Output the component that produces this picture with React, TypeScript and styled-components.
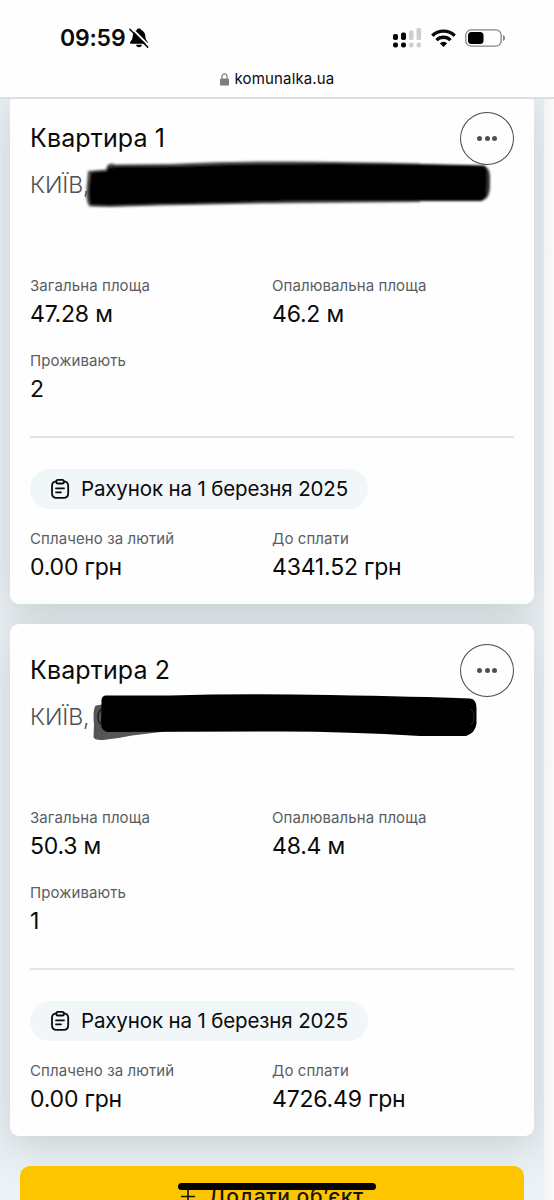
import React from "react";
import styled, { createGlobalStyle } from "styled-components";

const GlobalStyle = createGlobalStyle`
  html, body { margin: 0; padding: 0; }
  body { background: #f8f8fa; font-family: Inter, "Noto Sans", sans-serif; color: #0a0a0a; }
  * { box-sizing: border-box; }
`;

const Screen = styled.div`
  position: relative;
  width: 554px;
  height: 1200px;
  overflow: hidden;
  background: linear-gradient(90deg, #f2f2f5 544px, #fafafb 554px);
`;

const BrowserBar = styled.header`
  position: relative;
  z-index: 2;
  height: 99px;
  background: #fefefe;
  border-bottom: 2px solid #dcdfe2;
`;

const StatusBar = styled.div`
  display: flex;
  align-items: center;
  height: 66px;
  padding: 10px 48px 0 60px;
`;

const Clock = styled.span`
  width: 69px;
  font-size: 23px;
  font-weight: 600;
  line-height: 28px;
  letter-spacing: -0.2px;
  white-space: nowrap;
`;

const StatusIcons = styled.div`
  display: flex;
  align-items: center;
  margin-left: auto;
  gap: 9px;
`;

const AddressBar = styled.div`
  display: flex;
  align-items: center;
  justify-content: center;
  gap: 6px;
  height: 26px;
  font-size: 15px;
  line-height: 20px;
  letter-spacing: 0.15px;
`;

const Page = styled.main`
  width: 544px;
  height: 1108px;
  margin-top: -7px;
  padding: 0 10px;
  background: #ebf2f5;
  overflow: hidden;
`;

const CardList = styled.div`
  display: flex;
  flex-direction: column;
  gap: 20px;
`;

const Card = styled.section`
  position: relative;
  height: 512px;
  padding: 20px 20px 0;
  border-radius: 9px;
  background: #fefefe;
  box-shadow: 0 10px 40px rgba(40, 50, 55, 0.18);
`;

const CardHeader = styled.div`
  display: flex;
  align-items: center;
  justify-content: space-between;
  height: 53px;
`;

const Title = styled.h2`
  margin: -1px 0 0;
  font-size: 25px;
  font-weight: 400;
  line-height: 30px;
  letter-spacing: 0.12px;
`;

const MoreButton = styled.button`
  display: flex;
  align-items: center;
  justify-content: center;
  gap: 2.5px;
  width: 54px;
  height: 53px;
  padding: 0;
  border: 1.5px solid #4b4b4d;
  border-radius: 50%;
  background: transparent;
`;

const Dot = styled.span`
  width: 5px;
  height: 5px;
  border-radius: 50%;
  background: #505052;
`;

const Address = styled.div`
  height: 28px;
  margin-top: 6px;
  color: #505158;
  font-size: 23px;
  font-weight: 300;
  line-height: 28px;
  letter-spacing: -0.1px;
`;

const Stroke = styled.svg`
  position: absolute;
  left: 70px;
  top: 60px;
  width: 420px;
  height: 64px;
`;

const Stats = styled.div<{ $top: number }>`
  display: grid;
  grid-template-columns: 242px 1fr;
  row-gap: 23px;
  margin-top: ${(p) => p.$top}px;
`;

const Label = styled.div`
  color: #5a5d62;
  font-size: 15px;
  line-height: 20px;
  letter-spacing: 0.09px;
`;

const Value = styled.div`
  margin-top: 4px;
  font-size: 23px;
  line-height: 28px;
  letter-spacing: -0.2px;
`;

const Divider = styled.hr`
  height: 2px;
  margin: 33px 0 31px;
  border: 0;
  background: #e0e3e9;
`;

const Pill = styled.div`
  display: inline-flex;
  align-items: center;
  gap: 11px;
  width: 338px;
  height: 40px;
  padding: 0 0 1px 20px;
  border-radius: 20px;
  background: #f1f6f9;
  font-size: 20.5px;
  letter-spacing: -0.14px;
  white-space: nowrap;
`;

const AddButton = styled.button`
  display: flex;
  align-items: flex-start;
  justify-content: center;
  gap: 12px;
  width: 504px;
  height: 60px;
  margin: 30px 10px 0;
  padding: 18px 0 0;
  border: 0;
  border-radius: 10px;
  background: #fdc500;
  color: #16130a;
  font-family: inherit;
  font-size: 21px;
  font-weight: 500;
  line-height: 26px;
  letter-spacing: 0.6px;
  position: relative;
`;

const HomeIndicator = styled.div`
  position: absolute;
  z-index: 3;
  left: 178px;
  top: 1183px;
  width: 198px;
  height: 7px;
  border-radius: 4px;
  background: #000;
`;

const BellOff = () => (
  <svg width="20" height="20" viewBox="0 0 20 20">
    <path d="M10 .5c1.100 0 1.900.5 2.200 1.400 2.600.9 3.800 3 4 5.700.2 3.300.9 4.400 2.500 6.300.6.800.2 1.900-.8 1.900H2.100c-1 0-1.400-1.100-.8-1.900 1.600-1.900 2.300-3 2.500-6.300.2-2.700 1.400-4.800 4-5.700C8.100 1 8.900.5 10 .5z" />
    <path d="M7 16.800h6c-.3 1.700-1.500 2.500-3 2.500s-2.700-.8-3-2.500z" />
    <path d="M2 -.4 20.400 18" stroke="#fefefe" strokeWidth="1.800" />
    <path d="M.8 1.200 18.700 19.100" stroke="#0a0a0a" strokeWidth="1.500" strokeLinecap="round" />
  </svg>
);

const Signal = () => (
  <svg width="29" height="20" viewBox="0 0 29 20">
    <g fill="#0a0a0a">
      <rect x="0" y="6" width="5" height="6" rx="1.800" />
      <rect x="8" y="4.500" width="5" height="7.500" rx="1.800" />
      <rect x="0" y="14.500" width="5" height="5" rx="2" />
      <rect x="8" y="14.500" width="5" height="5" rx="2" />
    </g>
    <g fill="#cfcfcf">
      <rect x="16" y="2.500" width="4.600" height="9.500" rx="1.500" />
      <rect x="23.500" y="0" width="4.600" height="12" rx="1.500" />
      <rect x="16" y="14.500" width="4.600" height="5" rx="2" />
      <rect x="23.500" y="14.500" width="4.600" height="5" rx="2" />
    </g>
  </svg>
);

const Wifi = () => (
  <svg width="25" height="18" viewBox="0 0 25 18">
    <g fill="none" stroke="#0a0a0a" strokeWidth="3.400">
      <path d="M1.300 6.700a15.900 15.900 0 0 1 22.400 0" />
      <path d="M5.500 11.100a9.900 9.900 0 0 1 14 0" />
    </g>
    <path d="M12.500 17.900 8.800 14.200a5.300 5.300 0 0 1 7.400 0z" />
  </svg>
);

const Battery = () => (
  <svg width="41" height="18" viewBox="0 0 41 18">
    <rect x=".8" y=".8" width="35.400" height="16.400" rx="5.500" fill="none" stroke="#858585" strokeWidth="1.300" />
    <rect x="3" y="3" width="15.500" height="12" rx="3.500" fill="#000" />
    <path d="M38 6c1.500.5 2 1.600 2 3s-.5 2.500-2 3z" fill="#858585" />
  </svg>
);

const Lock = () => (
  <svg width="9" height="13" viewBox="0 0 9 13">
    <path d="M2 6V3.600a2.500 2.700 0 0 1 5 0V6" fill="none" stroke="#7e7e7e" strokeWidth="1.200" />
    <rect y="5.400" width="9" height="7.200" rx="1.200" fill="#7e7e7e" />
  </svg>
);

const Clipboard = () => (
  <svg width="20" height="20" viewBox="0 0 20 20" fill="none" stroke="#0a0a0a" strokeWidth="1.800" strokeLinecap="round" strokeLinejoin="round">
    <path d="M6.300 2.400C3.200 2.500 2 3.600 2 7v7c0 3.600 1.400 4.900 4.500 4.900h7.200c3.100 0 4.500-1.300 4.500-4.900V7c0-3.400-1.200-4.500-4.300-4.600" />
    <rect x="6.300" y=".9" width="7.600" height="3.600" rx="1.600" />
    <path d="M6 9.300h8M6 13.300h5" />
  </svg>
);

const Plus = () => (
  <svg width="16" height="16" viewBox="0 0 16 16">
    <path d="M8 0v16M1 12.500h14" stroke="#16130a" strokeWidth="1.600" fill="none" />
  </svg>
);

/* Marker strokes that hide the street part of each address. */
const FirstRedaction = () => (
  <Stroke viewBox="80 152 420 64">
    <defs>
      <filter id="soft1" x="-5%" y="-20%" width="110%" height="140%"><feGaussianBlur stdDeviation="0.8" /></filter>
    </defs>
    <g filter="url(#soft1)">
      <path d="M88 171 106 169.500 107 166Q110 162 115 164.500L170 164Q230 161 290 161.500T420 163.500L420 202 260 203.500 160 205.500 110 207 90 206.500Q85.500 204 86.500 188Z" fill="#4c4c4c" />
      <path d="M91 172 107 171 108 167 116 166.500 180 166Q240 163.500 330 163.500T484 165.500Q488 167 488.500 176V190Q487 200 481 201L300 201Q210 203 160 204L109 205.500 91 205Q88.500 202 89 188Z" fill="#000" />
      <path d="M487 168Q490 170 490 178V188Q489 196 486 199Z" fill="#333" />
    </g>
  </Stroke>
);

const SecondRedaction = () => (
  <Stroke viewBox="80 684 420 64">
    <defs>
      <filter id="soft2" x="-5%" y="-20%" width="110%" height="140%"><feGaussianBlur stdDeviation="0.7" /></filter>
    </defs>
    <g filter="url(#soft2)">
      <path d="M102 704.500 96 705.500Q92.500 708 94 725L93.500 737Q94 740.500 103 740 118 738.500 132 735.500L165 731.500 165 704Z" fill="#565656" />
      <path d="M106 695.500 170 695.500Q240 693.500 330 695T470 698.500Q476.500 699 476.500 708V724Q475 733 466 736L420 736Q340 731 270 731.500L107 732Q101 730 101 724L101.500 700Q102 695.500 106 695.500Z" fill="#000" />
    </g>
    <path d="M101 709Q98 712 98 717T102 725" fill="none" stroke="#202020" strokeWidth="1.500" />
    <path d="M471 709Q474 712 474 717T471 725" fill="none" stroke="#292929" strokeWidth="1" />
  </Stroke>
);

interface Flat {
  name: string;
  total: string;
  heated: string;
  residents: string;
  due: string;
  redaction: React.ReactNode;
}

const flats: Flat[] = [
  { name: "Квартира 1", total: "47.28 м", heated: "46.2 м", residents: "2", due: "4341.52 грн", redaction: <FirstRedaction /> },
  { name: "Квартира 2", total: "50.3 м", heated: "48.4 м", residents: "1", due: "4726.49 грн", redaction: <SecondRedaction /> },
];

const Stat = ({ label, value }: { label: string; value: string }) => (
  <div>
    <Label>{label}</Label>
    <Value>{value}</Value>
  </div>
);

const FlatCard = ({ flat }: { flat: Flat }) => (
  <Card>
    <CardHeader>
      <Title>{flat.name}</Title>
      <MoreButton aria-label="Меню"><Dot /><Dot /><Dot /></MoreButton>
    </CardHeader>
    <Address>КИЇВ,</Address>
    {flat.redaction}
    <Stats $top={77}>
      <Stat label="Загальна площа" value={flat.total} />
      <Stat label="Опалювальна площа" value={flat.heated} />
      <Stat label="Проживають" value={flat.residents} />
    </Stats>
    <Divider />
    <Pill><Clipboard />Рахунок на 1 березня 2025</Pill>
    <Stats $top={20}>
      <Stat label="Сплачено за лютий" value="0.00 грн" />
      <Stat label="До сплати" value={flat.due} />
    </Stats>
  </Card>
);

export default function App() {
  return (
    <Screen>
      <GlobalStyle />
      <BrowserBar>
        <StatusBar>
          <Clock>09:59</Clock>
          <BellOff />
          <StatusIcons><Signal /><Wifi /><Battery /></StatusIcons>
        </StatusBar>
        <AddressBar><Lock />komunalka.ua</AddressBar>
      </BrowserBar>
      <Page>
        <CardList>
          {flats.map((flat) => <FlatCard key={flat.name} flat={flat} />)}
        </CardList>
        <AddButton><Plus />Додати об’єкт</AddButton>
      </Page>
      <HomeIndicator />
    </Screen>
  );
}
